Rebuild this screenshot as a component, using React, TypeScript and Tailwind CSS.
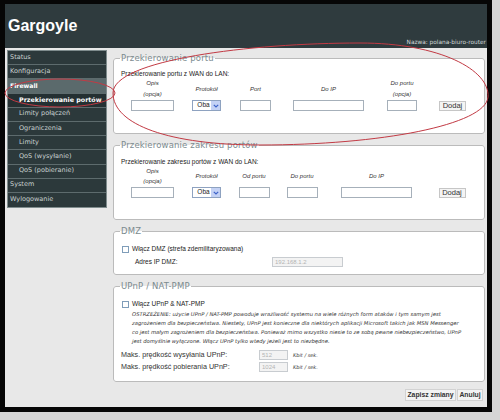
import React from 'react';

const sideItems = [
  { t: 'Status', kind: 'top' },
  { t: 'Konfiguracja', kind: 'top' },
  { t: 'Firewall', kind: 'head' },
  { t: 'Przekierowanie portów', kind: 'active' },
  { t: 'Limity połączeń', kind: 'sub' },
  { t: 'Ograniczenia', kind: 'sub' },
  { t: 'Limity', kind: 'sub' },
  { t: 'QoS (wysyłanie)', kind: 'sub' },
  { t: 'QoS (pobieranie)', kind: 'sub' },
  { t: 'System', kind: 'top' },
  { t: 'Wylogowanie', kind: 'top' },
];

function Sidebar() {
  return (
    <nav className="ml-[2px] mt-[2px] w-[100px] border border-[#7f8c8d] bg-[#2c393b] font-['DejaVu_Sans',sans-serif] text-[6.5px] whitespace-nowrap">
      {sideItems.map((it, i) => {
        let cls = 'h-[14.2px] flex items-center border-b border-[#5d6b6d] last:border-b-0 overflow-hidden ';
        if (it.kind === 'top') cls += 'pl-[2px] text-[#c9d1d1]';
        else if (it.kind === 'head') cls += 'pl-[2px] bg-[#5b6a6c] text-white font-bold text-[6.2px]';
        else if (it.kind === 'active') cls += 'pl-[11px] bg-[#243032] text-white font-bold text-[6.35px]';
        else cls += 'pl-[11px] text-[#c9d1d1]';
        return (
          <div key={i} className={cls}>
            {it.t}
          </div>
        );
      })}
    </nav>
  );
}

function Select() {
  return (
    <div className="w-[29px] h-[11px] border border-[#8ea2c0] bg-white flex items-center">
      <span className="flex-1 pl-[3px] text-[6.5px] leading-none text-[#222]">Oba</span>
      <span className="w-[9px] h-[9px] bg-[#c4d2f5] flex items-center justify-center">
        <svg width="6" height="4" viewBox="0 0 6 4">
          <path d="M0.8 0.8 L3 3 L5.2 0.8" fill="none" stroke="#3d63c9" strokeWidth="1.2" />
        </svg>
      </span>
    </div>
  );
}

function Dodaj() {
  return (
    <button className="w-[27px] h-[10px] border border-[#c6c6c6] bg-[#f4f4f4] text-[7.5px] leading-none text-[#333] flex items-center justify-center">
      Dodaj
    </button>
  );
}

function Head({ lines }: { lines: string[] }) {
  return (
    <>
      {lines.map((l, i) => (
        <span key={i} className="block italic text-[6px] text-[#333]">
          {l}
        </span>
      ))}
    </>
  );
}

function Legend({ children }: { children: React.ReactNode }) {
  return (
    <legend className="-ml-[1px] px-[1px] font-['DejaVu_Sans',sans-serif] text-[8.5px] leading-[10px] tracking-[0.15px] text-[#7c8b8f]">
      {children}
    </legend>
  );
}

function CheckBox() {
  return <span className="ml-[1px] w-[7px] h-[7px] border border-[#7f9db9] bg-white shrink-0" />;
}

export default function App() {
  return (
    <div className="relative w-[500px] h-[420px] bg-[#d5d5d5] overflow-hidden font-['Liberation_Sans',Arial,sans-serif] text-[#222]">
      <div className="w-[492px] h-[412px] bg-[#060606] pt-[4px] pl-[5px]">
        <div className="w-[482px] h-[403px] bg-[#e8e8e8] flex flex-col">
          <header className="h-[44px] shrink-0 bg-[#2f3b3e] flex justify-between">
            <h1 className="pl-[3px] pt-[14px] text-[16px] leading-[16px] font-bold text-white">Gargoyle</h1>
            <div className="self-end mb-[2.5px] pr-[1px] font-['DejaVu_Sans',sans-serif] text-[5.8px] leading-[7px] text-[#d0d7d7]">
              Nazwa: polana-biuro-router
            </div>
          </header>
          <div className="flex items-start">
            <Sidebar />
            <main className="ml-[6px] w-[372px] flex flex-col pt-[5px]">
              <div className="flex flex-col gap-[6px]">
                {/* Fieldset 1 */}
                <fieldset className="h-[81px] border border-[#bbbbbb] rounded-[3px] bg-white px-[7px]">
                  <Legend>Przekierowanie portu</Legend>
                  <div className="mt-[6px] h-[9px] leading-[9px] text-[6.5px] text-[#222]">Przekierowanie portu z WAN do LAN:</div>
                  <div className="ml-[1px] flex text-center leading-[11px]">
                    <div className="w-[61px] flex flex-col items-center">
                      <div className="h-[22px] flex flex-col justify-center"><Head lines={['Opis', '(opcja)']} /></div>
                      <input readOnly className="w-[43px] h-[11px] border border-[#a6b0ba] bg-white" />
                    </div>
                    <div className="w-[47px] flex flex-col items-center">
                      <div className="h-[22px] flex flex-col justify-center"><Head lines={['Protokół']} /></div>
                      <Select />
                    </div>
                    <div className="w-[51px] flex flex-col items-center">
                      <div className="h-[22px] flex flex-col justify-center"><Head lines={['Port']} /></div>
                      <input readOnly className="w-[31px] h-[11px] border border-[#a6b0ba] bg-white" />
                    </div>
                    <div className="w-[95px] flex flex-col items-center">
                      <div className="h-[22px] flex flex-col justify-center"><Head lines={['Do IP']} /></div>
                      <input readOnly className="w-[71px] h-[11px] border border-[#a6b0ba] bg-white" />
                    </div>
                    <div className="w-[52px] flex flex-col items-center">
                      <div className="h-[22px] flex flex-col justify-center"><Head lines={['Do portu', '(opcja)']} /></div>
                      <input readOnly className="w-[30px] h-[11px] border border-[#a6b0ba] bg-white" />
                    </div>
                    <div className="w-[49px] flex flex-col items-center">
                      <div className="h-[22px]" />
                      <div className="h-[11px] flex items-center"><Dodaj /></div>
                    </div>
                  </div>
                </fieldset>

                {/* Fieldset 2 */}
                <fieldset className="h-[80px] border border-[#bbbbbb] rounded-[3px] bg-white px-[7px]">
                  <Legend>Przekierowanie zakresu portów</Legend>
                  <div className="mt-[6.5px] h-[9px] leading-[9px] text-[6.5px] text-[#222]">Przekierowanie zakresu portów z WAN do LAN:</div>
                  <div className="ml-[1px] flex text-center leading-[10.5px]">
                    <div className="w-[61px] flex flex-col items-center">
                      <div className="h-[21.5px] flex flex-col justify-center"><Head lines={['Opis', '(opcja)']} /></div>
                      <input readOnly className="w-[43px] h-[11px] border border-[#a6b0ba] bg-white" />
                    </div>
                    <div className="w-[47px] flex flex-col items-center">
                      <div className="h-[21.5px] flex flex-col justify-center"><Head lines={['Protokół']} /></div>
                      <Select />
                    </div>
                    <div className="w-[48px] flex flex-col items-center">
                      <div className="h-[21.5px] flex flex-col justify-center"><Head lines={['Od portu']} /></div>
                      <input readOnly className="w-[31px] h-[11px] border border-[#a6b0ba] bg-white" />
                    </div>
                    <div className="w-[48px] flex flex-col items-center">
                      <div className="h-[21.5px] flex flex-col justify-center"><Head lines={['Do portu']} /></div>
                      <input readOnly className="w-[31px] h-[11px] border border-[#a6b0ba] bg-white" />
                    </div>
                    <div className="w-[101px] flex flex-col items-center">
                      <div className="h-[21.5px] flex flex-col justify-center"><Head lines={['Do IP']} /></div>
                      <input readOnly className="w-[71px] h-[11px] border border-[#a6b0ba] bg-white" />
                    </div>
                    <div className="w-[50px] flex flex-col items-center">
                      <div className="h-[21.5px]" />
                      <div className="h-[11px] flex items-center"><Dodaj /></div>
                    </div>
                  </div>
                </fieldset>

                {/* DMZ */}
                <fieldset className="h-[49px] border border-[#bbbbbb] rounded-[3px] bg-white px-[7px]">
                  <Legend>DMZ</Legend>
                  <div className="mt-[8px] h-[10px] flex items-center">
                    <CheckBox />
                    <span className="ml-[3px] text-[6.5px] leading-none">Włącz DMZ (strefa zdemilitaryzowana)</span>
                  </div>
                  <div className="mt-[3px] h-[10px] flex items-center">
                    <span className="w-[151px] pl-[14px] text-[6.5px] leading-none">Adres IP DMZ:</span>
                    <input
                      readOnly
                      disabled
                      value="192.168.1.2"
                      className="w-[71px] h-[10px] border border-[#c8ccd0] bg-[#f3f3f3] px-[2px] text-[6px] leading-none text-[#b4b4b4]"
                    />
                  </div>
                </fieldset>

                {/* UPnP */}
                <fieldset className="h-[101px] border border-[#bbbbbb] rounded-[3px] bg-white px-[7px]">
                  <Legend>UPnP / NAT-PMP</Legend>
                  <div className="mt-[8px] h-[10px] flex items-center">
                    <CheckBox />
                    <span className="ml-[3px] text-[6.5px] leading-none">Włącz UPnP &amp; NAT-PMP</span>
                  </div>
                  <p className="ml-[11px] mt-[1px] font-['DejaVu_Sans',sans-serif] italic text-[5.25px] leading-[9px] text-[#333] whitespace-nowrap">
                    <span className="block">OSTRZEŻENIE: użycie UPnP / NAT-PMP powoduje wrażliwość systemu na wiele różnych form ataków i tym samym jest</span>
                    <span className="block">zagrożeniem dla bezpieczeństwa. Niestety, UPnP jest konieczne dla niektórych aplikacji Microsoft takich jak MSN Messenger</span>
                    <span className="block">co jest małym zagrożeniem dla bezpieczeństwa. Ponieważ mimo wszystko niesie to ze sobą pewne niebezpieczeństwo, UPnP</span>
                    <span className="block">jest domyślnie wyłączone. Włącz UPnP tylko wtedy jeżeli jest to niezbędne.</span>
                  </p>
                  <div className="mt-[4px] h-[10px] flex items-center">
                    <span className="w-[138px] text-[7.2px] leading-none text-[#333]">Maks. prędkość wysyłania UPnP:</span>
                    <input
                      readOnly
                      disabled
                      value="512"
                      className="w-[29px] h-[10px] border border-[#c8ccd0] bg-[#f3f3f3] px-[2px] text-[6px] leading-none text-[#b4b4b4]"
                    />
                    <span className="ml-[5px] font-['DejaVu_Sans',sans-serif] italic text-[5px] leading-none text-[#333]">Kbit / sek.</span>
                  </div>
                  <div className="mt-[2px] h-[10px] flex items-center">
                    <span className="w-[138px] text-[7.2px] leading-none text-[#333]">Maks. prędkość pobierania UPnP:</span>
                    <input
                      readOnly
                      disabled
                      value="1024"
                      className="w-[29px] h-[10px] border border-[#c8ccd0] bg-[#f3f3f3] px-[2px] text-[6px] leading-none text-[#b4b4b4]"
                    />
                    <span className="ml-[5px] font-['DejaVu_Sans',sans-serif] italic text-[5px] leading-none text-[#333]">Kbit / sek.</span>
                  </div>
                </fieldset>
              </div>

              <div className="mt-[7px] pr-[2px] flex justify-end gap-[1px]">
                <button className="w-[51px] h-[12px] border border-[#d2d2d2] bg-[#f3f3f3] text-[6.8px] font-bold leading-none text-[#333]">
                  Zapisz zmiany
                </button>
                <button className="w-[26px] h-[12px] border border-[#d2d2d2] bg-[#f3f3f3] text-[6.8px] font-bold leading-none text-[#333]">
                  Anuluj
                </button>
              </div>
            </main>
          </div>
        </div>
      </div>

      <svg className="absolute left-0 top-0 pointer-events-none" width="500" height="420" viewBox="0 0 500 420">
        <path
          d="M 113 93 C 113 60, 250 43, 360 43 C 440 43, 490 70, 488 97 C 486 125, 380 145, 260 145 C 170 145, 113 125, 113 93 Z"
          fill="none"
          stroke="#c23a44"
          strokeWidth="1"
        />
        <ellipse cx="60" cy="93" rx="55" ry="14" fill="none" stroke="#c23a44" strokeWidth="1" />
      </svg>
    </div>
  );
}
